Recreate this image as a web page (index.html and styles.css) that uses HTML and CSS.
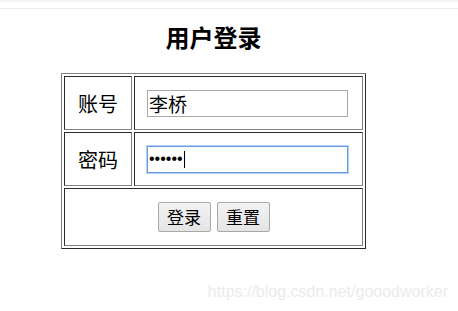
FILE: index.html
```html
<!DOCTYPE html>
<html lang="zh-CN">
<head>
<meta charset="utf-8">
<title>用户登录</title>
<link rel="stylesheet" href="styles.css">
</head>
<body>
<div class="topbar"></div>
<div class="page">
  <h1 class="title">用户登录</h1>
  <table class="login">
    <tr>
      <td class="label">账号</td>
      <td class="field"><input class="input" type="text" value="李桥"></td>
    </tr>
    <tr>
      <td class="label">密码</td>
      <td class="field">
        <div class="pass-wrap">
          <input class="input input-pass focused" type="password" value="123456">
          <span class="caret"></span>
        </div>
      </td>
    </tr>
    <tr>
      <td class="actions" colspan="2">
        <div class="buttons">
          <button class="btn" type="button">登录</button>
          <button class="btn" type="button">重置</button>
        </div>
      </td>
    </tr>
  </table>
</div>
<div class="watermark">https://blog.csdn.net/gooodworker</div>
</body>
</html>
```
FILE: styles.css
```css
html, body {
  margin: 0;
  padding: 0;
  background: #ffffff;
}

body {
  position: relative;
  width: 458px;
  height: 311px;
  overflow: hidden;
  font-family: "Noto Sans CJK SC", "Noto Sans", sans-serif;
  color: #000000;
}

.topbar {
  height: 9px;
  box-sizing: border-box;
  border-top: 2px solid #f4f4f4;
  border-bottom: 1px solid #eeeeee;
}

.page {
  width: 305px;
  margin-left: 61px;
}

.title {
  margin: 13px 0 21px;
  height: 30px;
  line-height: 30px;
  font-size: 24px;
  font-weight: bold;
  text-align: center;
}

.login {
  width: 305px;
  border-collapse: separate;
  border-spacing: 2px;
  border: 1px solid;
  border-color: #808080 #2b2b2b #2b2b2b #808080;
  font-size: 20px;
  table-layout: fixed;
}

.login td {
  border: 1px solid;
  border-color: #2b2b2b #808080 #808080 #2b2b2b;
  padding: 0;
  vertical-align: middle;
}

.label {
  width: 66px;
  height: 52px;
  text-align: center;
}

.field {
  height: 52px;
  padding-left: 12px !important;
}

.pass-wrap {
  position: relative;
  width: 201px;
}

.input {
  display: block;
  width: 201px;
  height: 27px;
  box-sizing: border-box;
  margin: 0;
  padding: 0 1px;
  border: 1px solid #a9a9a9;
  background: #ffffff;
  color: #000000;
  font-family: "Noto Sans CJK SC", sans-serif;
  font-size: 19px;
  outline: none;
}

.input-pass {
  font-family: "Liberation Sans", sans-serif;
  font-size: 16px;
}

.focused {
  border-color: #6a9be6;
  box-shadow: 0 0 0 1px #b3cdf4;
}

.caret {
  position: absolute;
  left: 37px;
  top: 5px;
  width: 1px;
  height: 17px;
  background: #000000;
}

.actions {
  height: 56px;
}

.buttons {
  display: flex;
  justify-content: center;
  gap: 6px;
}

.btn {
  width: 53px;
  height: 30px;
  box-sizing: border-box;
  margin: 0;
  padding: 0;
  border: 1px solid #a8a8a8;
  border-radius: 2px;
  background: linear-gradient(#f3f3f3, #e4e4e4);
  color: #000000;
  font-family: "Noto Sans CJK SC", sans-serif;
  font-size: 17px;
  line-height: 28px;
}

.watermark {
  position: absolute;
  right: 10px;
  top: 284px;
  font-family: "Liberation Sans", Arial, sans-serif;
  font-size: 16px;
  line-height: 16px;
  color: #ebebeb;
  white-space: nowrap;
}
```
